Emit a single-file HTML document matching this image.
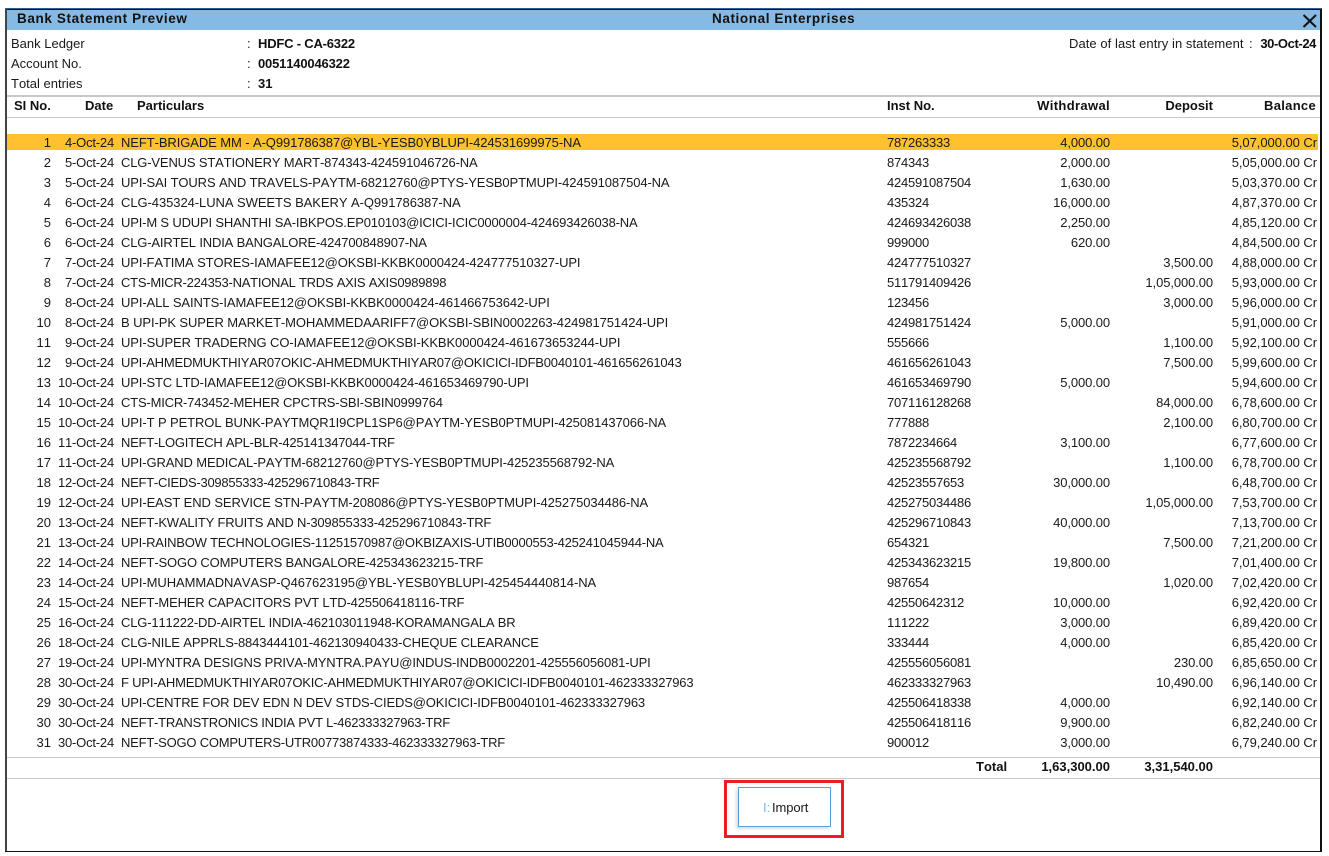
<!DOCTYPE html>
<html><head><meta charset="utf-8"><title>Bank Statement Preview</title>
<style>
html,body{margin:0;padding:0;background:#fff}
body{width:1329px;height:856px;position:relative;overflow:hidden;font:13px/14px "Liberation Sans",Arial,sans-serif;color:#1a1a1a;font-kerning:none}
.a{position:absolute;white-space:nowrap}
.bd{font-weight:bold;color:#111}
.ln{position:absolute;left:7px;width:1313px;background:#c8c8c8;height:1px}
.r{position:absolute;left:7px;width:1311px;height:16px}
.r span{position:absolute;top:2px;white-space:nowrap;line-height:14px}
.n{right:1267px}.d{right:1204px;letter-spacing:-.2px}.p{left:114px}.i{left:880px;letter-spacing:-.23px}.w{right:208px;letter-spacing:-.1px}.e{right:105px;letter-spacing:-.1px}.c{right:1px;letter-spacing:-.05px}
.hl{background:#ffc12e}
</style></head><body>
<div class="a" style="left:5px;top:8px;width:1317px;height:1px;background:#2f5f8f"></div>
<div class="a" style="left:5px;top:9px;width:2px;height:843px;background:#444"></div>
<div class="a" style="left:1320px;top:9px;width:2px;height:843px;background:#111"></div>
<div class="a" style="left:5px;top:851px;width:1317px;height:1px;background:#111"></div>
<div class="a" style="left:7px;top:9px;width:1313px;height:1px;background:#111"></div>
<div class="a" style="left:7px;top:10px;width:1313px;height:20px;background:#85bae4"></div>
<div class="a bd" style="left:17px;top:12px;font-size:13.5px;letter-spacing:.62px">Bank Statement Preview</div>
<div class="a bd" style="left:712px;top:12px;font-size:13.5px;letter-spacing:.6px">National Enterprises</div>
<svg class="a" style="left:1301px;top:13px" width="18" height="16" viewBox="0 0 18 16"><path d="M2.500 2L15 14M15 2L2.500 14" stroke="#111" stroke-width="2" fill="none"/></svg>

<div class="a" style="left:11px;top:37px">Bank Ledger</div>
<div class="a" style="left:11px;top:57px">Account No.</div>
<div class="a" style="left:11px;top:77px">Total entries</div>
<div class="a" style="left:247px;top:37px">:</div>
<div class="a" style="left:247px;top:57px">:</div>
<div class="a" style="left:247px;top:77px">:</div>
<div class="a bd" style="left:258px;top:37px;letter-spacing:-.2px">HDFC - CA-6322</div>
<div class="a bd" style="left:258px;top:57px;letter-spacing:-.17px">0051140046322</div>
<div class="a bd" style="left:258px;top:77px">31</div>
<div class="a" style="left:1069px;top:37px;letter-spacing:.06px">Date of last entry in statement</div>
<div class="a" style="left:1249px;top:37px">:</div>
<div class="a bd" style="right:13px;top:37px;letter-spacing:-.4px">30-Oct-24</div>

<div class="ln" style="top:95px;height:2px"></div>
<div class="a bd" style="left:14px;top:99px">SI No.</div>
<div class="a bd" style="left:85px;top:99px">Date</div>
<div class="a bd" style="left:137px;top:99px">Particulars</div>
<div class="a bd" style="left:887px;top:99px">Inst No.</div>
<div class="a bd" style="right:219px;top:99px;letter-spacing:.35px">Withdrawal</div>
<div class="a bd" style="right:116px;top:99px">Deposit</div>
<div class="a bd" style="right:13px;top:99px;letter-spacing:.3px">Balance</div>
<div class="ln" style="top:117px"></div>

<div class="r hl" style="top:134px"><span class="n">1</span><span class="d">4-Oct-24</span><span class="p" style="letter-spacing:-.09px">NEFT-BRIGADE MM - A-Q991786387@YBL-YESB0YBLUPI-424531699975-NA</span><span class="i">787263333</span><span class="w">4,000.00</span><span class="c">5,07,000.00 Cr</span></div>
<div class="r" style="top:154px"><span class="n">2</span><span class="d">5-Oct-24</span><span class="p" style="letter-spacing:-.16px">CLG-VENUS STATIONERY MART-874343-424591046726-NA</span><span class="i">874343</span><span class="w">2,000.00</span><span class="c">5,05,000.00 Cr</span></div>
<div class="r" style="top:174px"><span class="n">3</span><span class="d">5-Oct-24</span><span class="p" style="letter-spacing:-.12px">UPI-SAI TOURS AND TRAVELS-PAYTM-68212760@PTYS-YESB0PTMUPI-424591087504-NA</span><span class="i">424591087504</span><span class="w">1,630.00</span><span class="c">5,03,370.00 Cr</span></div>
<div class="r" style="top:194px"><span class="n">4</span><span class="d">6-Oct-24</span><span class="p" style="letter-spacing:-.065px">CLG-435324-LUNA SWEETS BAKERY A-Q991786387-NA</span><span class="i">435324</span><span class="w">16,000.00</span><span class="c">4,87,370.00 Cr</span></div>
<div class="r" style="top:214px"><span class="n">5</span><span class="d">6-Oct-24</span><span class="p" style="letter-spacing:-.17px">UPI-M S UDUPI SHANTHI SA-IBKPOS.EP010103@ICICI-ICIC0000004-424693426038-NA</span><span class="i">424693426038</span><span class="w">2,250.00</span><span class="c">4,85,120.00 Cr</span></div>
<div class="r" style="top:234px"><span class="n">6</span><span class="d">6-Oct-24</span><span class="p" style="letter-spacing:-.17px">CLG-AIRTEL INDIA BANGALORE-424700848907-NA</span><span class="i">999000</span><span class="w">620.00</span><span class="c">4,84,500.00 Cr</span></div>
<div class="r" style="top:254px"><span class="n">7</span><span class="d">7-Oct-24</span><span class="p" style="letter-spacing:-.11px">UPI-FATIMA STORES-IAMAFEE12@OKSBI-KKBK0000424-424777510327-UPI</span><span class="i">424777510327</span><span class="e">3,500.00</span><span class="c">4,88,000.00 Cr</span></div>
<div class="r" style="top:274px"><span class="n">8</span><span class="d">7-Oct-24</span><span class="p" style="letter-spacing:-.25px">CTS-MICR-224353-NATIONAL TRDS AXIS AXIS0989898</span><span class="i">511791409426</span><span class="e">1,05,000.00</span><span class="c">5,93,000.00 Cr</span></div>
<div class="r" style="top:294px"><span class="n">9</span><span class="d">8-Oct-24</span><span class="p" style="letter-spacing:-.11px">UPI-ALL SAINTS-IAMAFEE12@OKSBI-KKBK0000424-461466753642-UPI</span><span class="i">123456</span><span class="e">3,000.00</span><span class="c">5,96,000.00 Cr</span></div>
<div class="r" style="top:314px"><span class="n">10</span><span class="d">8-Oct-24</span><span class="p" style="letter-spacing:-.09px">B UPI-PK SUPER MARKET-MOHAMMEDAARIFF7@OKSBI-SBIN0002263-424981751424-UPI</span><span class="i">424981751424</span><span class="w">5,000.00</span><span class="c">5,91,000.00 Cr</span></div>
<div class="r" style="top:334px"><span class="n">11</span><span class="d">9-Oct-24</span><span class="p" style="letter-spacing:-.1px">UPI-SUPER TRADERNG CO-IAMAFEE12@OKSBI-KKBK0000424-461673653244-UPI</span><span class="i">555666</span><span class="e">1,100.00</span><span class="c">5,92,100.00 Cr</span></div>
<div class="r" style="top:354px"><span class="n">12</span><span class="d">9-Oct-24</span><span class="p" style="letter-spacing:-.2px">UPI-AHMEDMUKTHIYAR07OKIC-AHMEDMUKTHIYAR07@OKICICI-IDFB0040101-461656261043</span><span class="i">461656261043</span><span class="e">7,500.00</span><span class="c">5,99,600.00 Cr</span></div>
<div class="r" style="top:374px"><span class="n">13</span><span class="d">10-Oct-24</span><span class="p" style="letter-spacing:-.14px">UPI-STC LTD-IAMAFEE12@OKSBI-KKBK0000424-461653469790-UPI</span><span class="i">461653469790</span><span class="w">5,000.00</span><span class="c">5,94,600.00 Cr</span></div>
<div class="r" style="top:394px"><span class="n">14</span><span class="d">10-Oct-24</span><span class="p" style="letter-spacing:-.19px">CTS-MICR-743452-MEHER CPCTRS-SBI-SBIN0999764</span><span class="i">707116128268</span><span class="e">84,000.00</span><span class="c">6,78,600.00 Cr</span></div>
<div class="r" style="top:414px"><span class="n">15</span><span class="d">10-Oct-24</span><span class="p" style="letter-spacing:-.1px">UPI-T P PETROL BUNK-PAYTMQR1I9CPL1SP6@PAYTM-YESB0PTMUPI-425081437066-NA</span><span class="i">777888</span><span class="e">2,100.00</span><span class="c">6,80,700.00 Cr</span></div>
<div class="r" style="top:434px"><span class="n">16</span><span class="d">11-Oct-24</span><span class="p" style="letter-spacing:-.25px">NEFT-LOGITECH APL-BLR-425141347044-TRF</span><span class="i">7872234664</span><span class="w">3,100.00</span><span class="c">6,77,600.00 Cr</span></div>
<div class="r" style="top:454px"><span class="n">17</span><span class="d">11-Oct-24</span><span class="p" style="letter-spacing:-.13px">UPI-GRAND MEDICAL-PAYTM-68212760@PTYS-YESB0PTMUPI-425235568792-NA</span><span class="i">425235568792</span><span class="e">1,100.00</span><span class="c">6,78,700.00 Cr</span></div>
<div class="r" style="top:474px"><span class="n">18</span><span class="d">12-Oct-24</span><span class="p" style="letter-spacing:-.26px">NEFT-CIEDS-309855333-425296710843-TRF</span><span class="i">42523557653</span><span class="w">30,000.00</span><span class="c">6,48,700.00 Cr</span></div>
<div class="r" style="top:494px"><span class="n">19</span><span class="d">12-Oct-24</span><span class="p" style="letter-spacing:-.1px">UPI-EAST END SERVICE STN-PAYTM-208086@PTYS-YESB0PTMUPI-425275034486-NA</span><span class="i">425275034486</span><span class="e">1,05,000.00</span><span class="c">7,53,700.00 Cr</span></div>
<div class="r" style="top:514px"><span class="n">20</span><span class="d">13-Oct-24</span><span class="p" style="letter-spacing:-.19px">NEFT-KWALITY FRUITS AND N-309855333-425296710843-TRF</span><span class="i">425296710843</span><span class="w">40,000.00</span><span class="c">7,13,700.00 Cr</span></div>
<div class="r" style="top:534px"><span class="n">21</span><span class="d">13-Oct-24</span><span class="p" style="letter-spacing:-.22px">UPI-RAINBOW TECHNOLOGIES-11251570987@OKBIZAXIS-UTIB0000553-425241045944-NA</span><span class="i">654321</span><span class="e">7,500.00</span><span class="c">7,21,200.00 Cr</span></div>
<div class="r" style="top:554px"><span class="n">22</span><span class="d">14-Oct-24</span><span class="p" style="letter-spacing:-.15px">NEFT-SOGO COMPUTERS BANGALORE-425343623215-TRF</span><span class="i">425343623215</span><span class="w">19,800.00</span><span class="c">7,01,400.00 Cr</span></div>
<div class="r" style="top:574px"><span class="n">23</span><span class="d">14-Oct-24</span><span class="p" style="letter-spacing:-.08px">UPI-MUHAMMADNAVASP-Q467623195@YBL-YESB0YBLUPI-425454440814-NA</span><span class="i">987654</span><span class="e">1,020.00</span><span class="c">7,02,420.00 Cr</span></div>
<div class="r" style="top:594px"><span class="n">24</span><span class="d">15-Oct-24</span><span class="p" style="letter-spacing:-.17px">NEFT-MEHER CAPACITORS PVT LTD-425506418116-TRF</span><span class="i">42550642312</span><span class="w">10,000.00</span><span class="c">6,92,420.00 Cr</span></div>
<div class="r" style="top:614px"><span class="n">25</span><span class="d">16-Oct-24</span><span class="p" style="letter-spacing:-.16px">CLG-111222-DD-AIRTEL INDIA-462103011948-KORAMANGALA BR</span><span class="i">111222</span><span class="w">3,000.00</span><span class="c">6,89,420.00 Cr</span></div>
<div class="r" style="top:634px"><span class="n">26</span><span class="d">18-Oct-24</span><span class="p" style="letter-spacing:-.14px">CLG-NILE APPRLS-8843444101-462130940433-CHEQUE CLEARANCE</span><span class="i">333444</span><span class="w">4,000.00</span><span class="c">6,85,420.00 Cr</span></div>
<div class="r" style="top:654px"><span class="n">27</span><span class="d">19-Oct-24</span><span class="p" style="letter-spacing:-.155px">UPI-MYNTRA DESIGNS PRIVA-MYNTRA.PAYU@INDUS-INDB0002201-425556056081-UPI</span><span class="i">425556056081</span><span class="e">230.00</span><span class="c">6,85,650.00 Cr</span></div>
<div class="r" style="top:674px"><span class="n">28</span><span class="d">30-Oct-24</span><span class="p" style="letter-spacing:-.19px">F UPI-AHMEDMUKTHIYAR07OKIC-AHMEDMUKTHIYAR07@OKICICI-IDFB0040101-462333327963</span><span class="i">462333327963</span><span class="e">10,490.00</span><span class="c">6,96,140.00 Cr</span></div>
<div class="r" style="top:694px"><span class="n">29</span><span class="d">30-Oct-24</span><span class="p" style="letter-spacing:-.15px">UPI-CENTRE FOR DEV EDN N DEV STDS-CIEDS@OKICICI-IDFB0040101-462333327963</span><span class="i">425506418338</span><span class="w">4,000.00</span><span class="c">6,92,140.00 Cr</span></div>
<div class="r" style="top:714px"><span class="n">30</span><span class="d">30-Oct-24</span><span class="p" style="letter-spacing:-.23px">NEFT-TRANSTRONICS INDIA PVT L-462333327963-TRF</span><span class="i">425506418116</span><span class="w">9,900.00</span><span class="c">6,82,240.00 Cr</span></div>
<div class="r" style="top:734px"><span class="n">31</span><span class="d">30-Oct-24</span><span class="p" style="letter-spacing:-.22px">NEFT-SOGO COMPUTERS-UTR00773874333-462333327963-TRF</span><span class="i">900012</span><span class="w">3,000.00</span><span class="c">6,79,240.00 Cr</span></div>

<div class="ln" style="top:757px"></div>
<div class="a bd" style="left:976px;top:760px">Total</div>
<div class="a bd" style="right:219px;top:760px">1,63,300.00</div>
<div class="a bd" style="right:116px;top:760px">3,31,540.00</div>
<div class="ln" style="top:778px"></div>

<div class="a" style="left:724px;top:780px;width:114px;height:52px;border:3px solid #ed1c24"></div>
<div class="a" style="left:738px;top:787px;width:91px;height:38px;border:1px solid #4fa3e0;background:#fff;box-shadow:-2px 2px 3px rgba(0,0,0,.14)"></div>
<div class="a" style="left:763px;top:801px;color:#7db4e6">I:</div>
<div class="a" style="left:772px;top:801px;letter-spacing:-.1px">Import</div>
</body></html>
